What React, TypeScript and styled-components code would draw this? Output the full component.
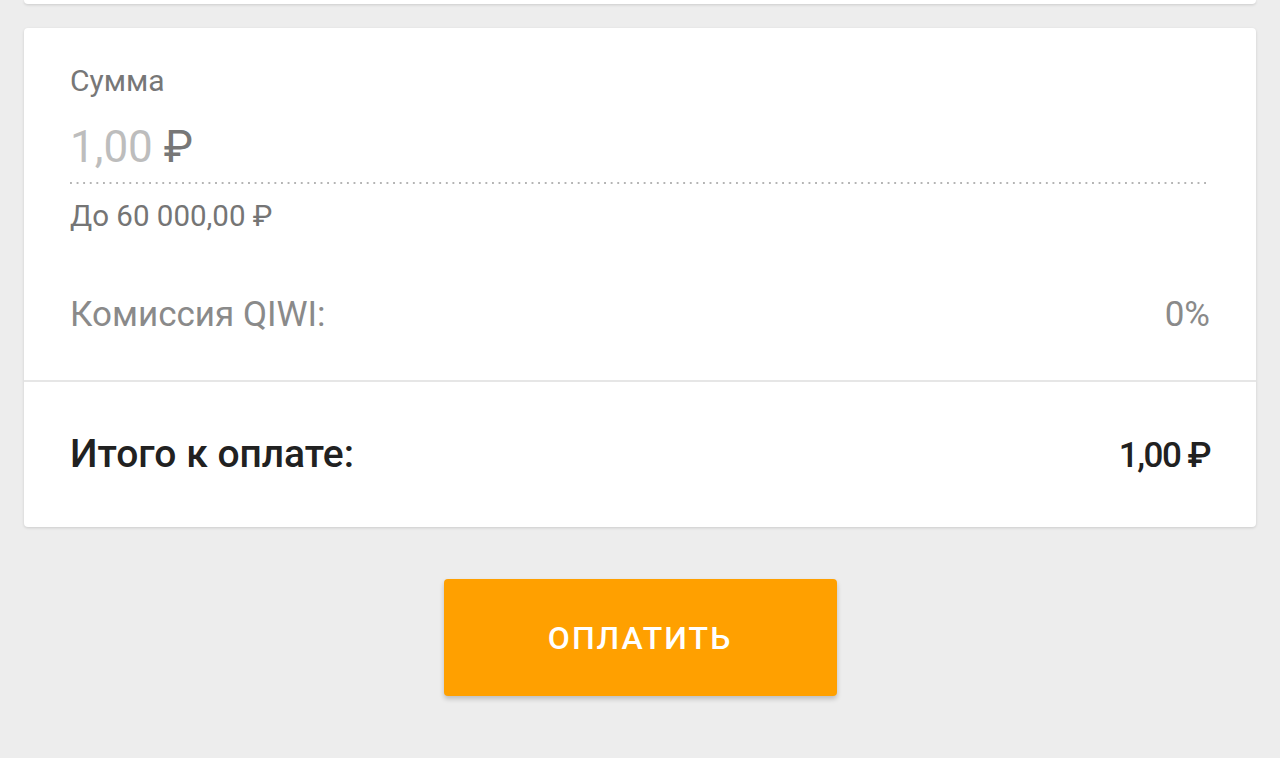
import React from 'react'
import styled, { createGlobalStyle } from 'styled-components'

const GlobalStyle = createGlobalStyle`
  html, body {
    margin: 0;
    padding: 0;
    background: #ededed;
    font-family: Roboto, 'Noto Sans', sans-serif;
  }
`

const Page = styled.div`
  display: flex;
  flex-direction: column;
  align-items: stretch;
  padding: 0 24px;
  height: 758px;
  box-sizing: border-box;
`

const PrevCard = styled.div`
  height: 4px;
  background: #fff;
  border-radius: 0 0 4px 4px;
  box-shadow: 0 1px 3px rgba(0, 0, 0, 0.14);
`

const Card = styled.section`
  margin-top: 24px;
  background: #fff;
  border-radius: 4px;
  box-shadow: 0 1px 3px rgba(0, 0, 0, 0.14);
  display: flex;
  flex-direction: column;
`

const AmountBlock = styled.div`
  padding: 37px 46px 45px;
  display: flex;
  flex-direction: column;
`

const Label = styled.div`
  font-size: 30px;
  line-height: 32px;
  color: #777;
`

const AmountField = styled.div`
  margin-top: 26px;
  font-size: 44px;
  line-height: 48px;
  color: #bdbdbd;
  background-image: linear-gradient(to right, #b4b4b4 2px, transparent 2px);
  background-size: 6.6px 2px;
  background-repeat: repeat-x;
  background-position: left bottom;
  padding-bottom: 13px;
`

const Currency = styled.span`
  color: #777;
`

const Hint = styled.div`
  margin-top: 16px;
  font-size: 29.5px;
  line-height: 32px;
  color: #757575;
`

const Row = styled.div<{ $total?: boolean }>`
  display: flex;
  justify-content: space-between;
  align-items: baseline;
  font-size: ${p => (p.$total ? '39px' : '35px')};
  line-height: 40px;
  font-weight: ${p => (p.$total ? 500 : 400)};
  color: ${p => (p.$total ? '#212121' : '#8a8a8a')};
`

const FeeRow = styled(Row)`
  margin-top: 63px;
`

const TotalSum = styled.span`
  font-size: 35px;
  letter-spacing: -1.5px;
`

const Divider = styled.hr`
  margin: 0;
  border: 0;
  height: 2px;
  background: #e6e6e6;
`

const TotalBlock = styled.div`
  height: 145px;
  padding: 0 46px;
  display: flex;
  flex-direction: column;
  justify-content: center;
`

const Actions = styled.div`
  display: flex;
  justify-content: center;
  margin-top: 52px;
`

const PayButton = styled.button`
  width: 393px;
  height: 117px;
  border: 0;
  border-radius: 4px;
  background: #ffa000;
  color: #fff;
  font-family: Roboto, 'Noto Sans', sans-serif;
  font-size: 32px;
  font-weight: 500;
  letter-spacing: 2px;
  box-shadow: 0 3px 5px rgba(0, 0, 0, 0.2);
  cursor: pointer;
`

const App = () => (
  <>
    <GlobalStyle />
    <Page>
      <PrevCard />
      <Card>
        <AmountBlock>
          <Label>Сумма</Label>
          <AmountField>
            1,00 <Currency>₽</Currency>
          </AmountField>
          <Hint>До 60 000,00 ₽</Hint>
          <FeeRow>
            <span>Комиссия QIWI:</span>
            <span>0%</span>
          </FeeRow>
        </AmountBlock>
        <Divider />
        <TotalBlock>
          <Row $total>
            <span>Итого к оплате:</span>
            <TotalSum>1,00 ₽</TotalSum>
          </Row>
        </TotalBlock>
      </Card>
      <Actions>
        <PayButton>ОПЛАТИТЬ</PayButton>
      </Actions>
    </Page>
  </>
)

export default App
